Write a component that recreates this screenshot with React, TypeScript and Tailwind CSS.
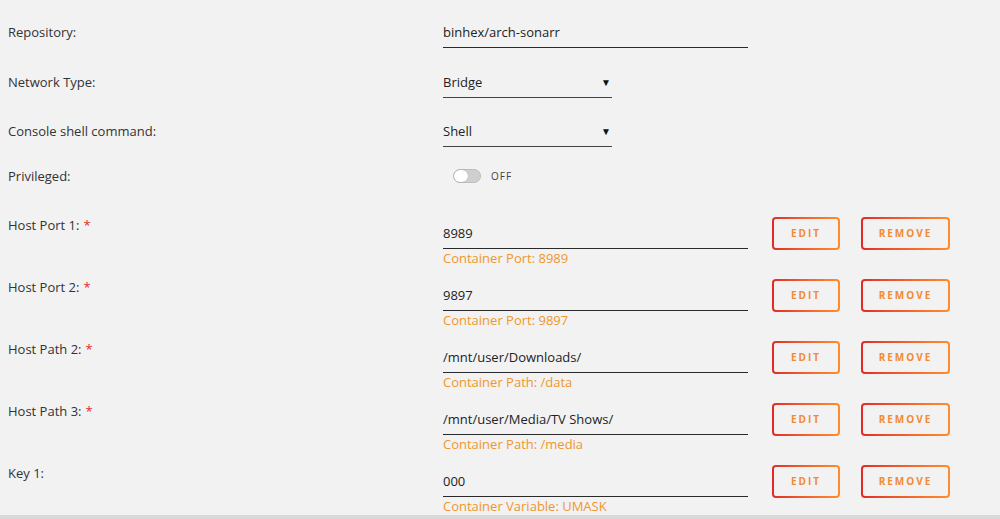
import React from 'react';

const font = { fontFamily: '"Open Sans", "Noto Sans", Arial, sans-serif' };

type HostRow = { label: string; value: string; help: string; required?: boolean };

const hostRows: HostRow[] = [
  { label: 'Host Port 1:', value: '8989', help: 'Container Port: 8989', required: true },
  { label: 'Host Port 2:', value: '9897', help: 'Container Port: 9897', required: true },
  { label: 'Host Path 2:', value: '/mnt/user/Downloads/', help: 'Container Path: /data', required: true },
  { label: 'Host Path 3:', value: '/mnt/user/Media/TV Shows/', help: 'Container Path: /media', required: true },
  { label: 'Key 1:', value: '000', help: 'Container Variable: UMASK' },
];

const Label = ({ children, required }: { children: React.ReactNode; required?: boolean }) => (
  <div className="w-[443px] shrink-0 pl-2 text-[13px] leading-5 text-[#333]">
    {children}
    {required && <span className="ml-1 text-[#e22828]">*</span>}
  </div>
);

const TextField = ({ value, width = 'w-[305px]' }: { value: string; width?: string }) => (
  <div className={`${width} h-[26px] border-b-[1.5px] border-[#2a2a2a] pb-1 text-[13px] leading-5 text-[#222]`}>
    {value}
  </div>
);

const SelectField = ({ value }: { value: string }) => (
  <div className="flex h-[26px] w-[169px] items-start justify-between border-b-[1.5px] border-[#444] pb-1 text-[13px] leading-5 text-[#222]">
    <span>{value}</span>
    <span className="mr-[1px] text-[10px] leading-5 text-[#111]">▼</span>
  </div>
);

const OutlineButton = ({ label, width }: { label: string; width: string }) => (
  <div className={`${width} h-[33px] rounded-[4px] bg-gradient-to-r from-[#e22828] to-[#ff8c2f] p-[2px]`}>
    <div className="flex h-full w-full items-center justify-center rounded-[2px] bg-[#f2f2f2] text-[10px] font-bold tracking-[2px] text-[#f28a33]">
      {label}
    </div>
  </div>
);

export default function App() {
  return (
    <div className="flex h-[519px] w-[1000px] flex-col overflow-hidden bg-[#f2f2f2]" style={font}>
      <div className="flex flex-col">
        {/* Repository */}
        <div className="mt-[22px] flex items-start">
          <Label>Repository:</Label>
          <TextField value="binhex/arch-sonarr" />
        </div>

        {/* Network Type */}
        <div className="mt-6 flex items-start">
          <Label>Network Type:</Label>
          <SelectField value="Bridge" />
        </div>

        {/* Console shell */}
        <div className="mt-[23px] flex items-start">
          <Label>Console shell command:</Label>
          <SelectField value="Shell" />
        </div>

        {/* Privileged */}
        <div className="mt-[19px] flex h-5 items-center">
          <Label>Privileged:</Label>
          <div className="ml-[10px] flex items-center gap-[10px]">
            <div className="relative h-[14px] w-[28px] rounded-full border border-[#bdbdbd] bg-[#cfcfcf]">
              <div className="absolute left-0 top-0 h-[12px] w-[14px] rounded-full bg-white shadow-[0_0_1px_rgba(0,0,0,0.3)]" />
            </div>
            <span className="text-[10px] tracking-[1px] text-[#444]">OFF</span>
          </div>
        </div>

        {/* Ports, paths, variables */}
        <div className="mt-[29px] flex flex-col gap-[10px]">
          {hostRows.map((row) => (
            <div key={row.label} className="flex items-start">
              <Label required={row.required}>{row.label}</Label>
              <div className="mt-2 flex flex-col">
                <TextField value={row.value} />
                <div className="text-[13px] leading-[18px] text-[#f0962e]">{row.help}</div>
              </div>
              <div className="ml-6 mt-[2px] flex gap-[21px]">
                <OutlineButton label="EDIT" width="w-[68px]" />
                <OutlineButton label="REMOVE" width="w-[89px]" />
              </div>
            </div>
          ))}
        </div>
      </div>
      <div className="h-[6px] shrink-0 bg-[#d9d9d9]" />
    </div>
  );
}
